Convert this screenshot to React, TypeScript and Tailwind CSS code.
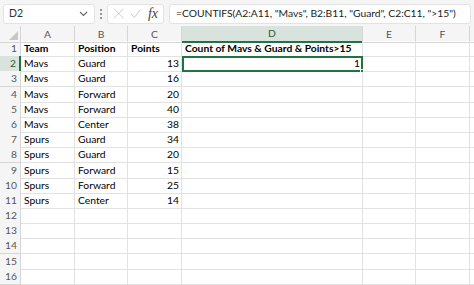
const cols = ["A", "B", "C", "D", "E", "F"];

const rows: [string, string, string, string][] = [
  ["Team", "Position", "Points", "Count of Mavs & Guard & Points>15"],
  ["Mavs", "Guard", "13", "1"],
  ["Mavs", "Guard", "16", ""],
  ["Mavs", "Forward", "20", ""],
  ["Mavs", "Forward", "40", ""],
  ["Mavs", "Center", "38", ""],
  ["Spurs", "Guard", "34", ""],
  ["Spurs", "Guard", "20", ""],
  ["Spurs", "Forward", "15", ""],
  ["Spurs", "Forward", "25", ""],
  ["Spurs", "Center", "14", ""],
  ["", "", "", ""],
  ["", "", "", ""],
  ["", "", "", ""],
  ["", "", "", ""],
  ["", "", "", ""],
];

const grid = "grid grid-cols-[21px_54px_53px_54px_181px_53px_54px_1fr]";

function FormulaBar() {
  return (
    <div className="flex h-[26px] items-center gap-[5px] bg-[#f5f5f5] px-[3px] pt-[1px]">
      <div className="flex h-[20px] w-[92px] shrink-0 items-center justify-between rounded-[3px] border border-[#e3e3e3] bg-white pl-[5px] pr-[6px] text-[10.5px] text-[#333]">
        <span>D2</span>
        <svg width="9" height="6" viewBox="0 0 9 6">
          <path d="M1 1 L4.5 4.5 L8 1" fill="none" stroke="#666" strokeWidth="1.1" />
        </svg>
      </div>
      <div className="flex shrink-0 flex-col gap-[2px]">
        <span className="h-[2px] w-[2px] rounded-full bg-[#777]" />
        <span className="h-[2px] w-[2px] rounded-full bg-[#777]" />
        <span className="h-[2px] w-[2px] rounded-full bg-[#777]" />
      </div>
      <div className="flex h-[20px] w-[57px] shrink-0 items-center gap-[6px] rounded-[3px] border border-[#e3e3e3] bg-white px-[5px]">
        <svg width="13" height="13" viewBox="0 0 13 13">
          <path d="M1 1 L12 12 M12 1 L1 12" stroke="#c4c4c4" strokeWidth="1" fill="none" />
        </svg>
        <svg width="13" height="13" viewBox="0 0 13 13">
          <path d="M1 7 L5 11 L12 2" stroke="#c4c4c4" strokeWidth="1" fill="none" />
        </svg>
        <span className="font-['Liberation_Serif',serif] text-[14px] italic leading-none text-[#444]">fx</span>
      </div>
      <div className="flex h-[20px] min-w-0 flex-1 items-center overflow-hidden rounded-[3px] border border-[#e3e3e3] bg-white pl-[6px] text-[10.3px] text-[#222]">
        <span className="whitespace-pre">=COUNTIFS(A2:A11, "Mavs", B2:B11, "Guard", C2:C11, "&gt;15")</span>
      </div>
    </div>
  );
}

export default function App() {
  return (
    <div className="h-[285px] w-[474px] overflow-hidden bg-white font-['Lato',sans-serif] text-[10.3px] text-black">
      <FormulaBar />
      <div className={`${grid} h-[15px] bg-[#f5f5f5] text-[10.3px] text-[#555]`}>
        <div className="relative border-b border-r border-[#d6d6d6]">
          <svg className="absolute bottom-[2px] right-[2px]" width="9" height="9" viewBox="0 0 9 9">
            <path d="M9 0 L9 9 L0 9 Z" fill="#c8c8c8" />
          </svg>
        </div>
        {cols.map((c) => (
          <div
            key={c}
            className={
              c === "D"
                ? "flex items-center justify-center border-b-2 border-r border-b-[#217346] border-r-[#d6d6d6] bg-[#d9e3dd] text-[#1e5e3a]"
                : "flex items-center justify-center border-b border-r border-[#d6d6d6]"
            }
          >
            {c}
          </div>
        ))}
        <div className="border-b border-[#d6d6d6]" />
      </div>
      {rows.map((r, i) => {
        const n = i + 1;
        const head = n === 1;
        const sel = n === 2;
        return (
          <div key={n} className={`${grid} h-[15.2px] leading-[15px]`}>
            <div
              className={
                sel
                  ? "border-b border-r-2 border-b-[#d6d6d6] border-r-[#217346] bg-[#d9e3dd] pr-[3px] text-right text-[#1e5e3a]"
                  : "border-b border-r border-[#d6d6d6] bg-[#f5f5f5] pr-[3px] text-right text-[#555]"
              }
            >
              {n}
            </div>
            <div className={`border-b border-r border-[#e2e2e2] pl-[3px] ${head ? "font-bold" : ""}`}>{r[0]}</div>
            <div className={`border-b border-r border-[#e2e2e2] pl-[3px] ${head ? "font-bold" : ""}`}>{r[1]}</div>
            <div className={`border-b border-r border-[#e2e2e2] pr-[2px] ${head ? "pl-[3px] font-bold" : "text-right"}`}>{r[2]}</div>
            {sel ? (
              <div className="relative border-2 border-[#217346] pr-[1px] text-right leading-[11px]">
                {r[3]}
                <span className="absolute -bottom-[3px] -right-[3px] h-[4px] w-[4px] border border-white bg-[#217346]" />
              </div>
            ) : (
              <div className={`whitespace-nowrap border-b border-r border-[#e2e2e2] pl-[3px] ${head ? "font-bold" : "text-right"}`}>{r[3]}</div>
            )}
            <div className="border-b border-r border-[#e2e2e2]" />
            <div className="border-b border-r border-[#e2e2e2]" />
            <div className="border-b border-[#e2e2e2]" />
          </div>
        );
      })}
    </div>
  );
}
